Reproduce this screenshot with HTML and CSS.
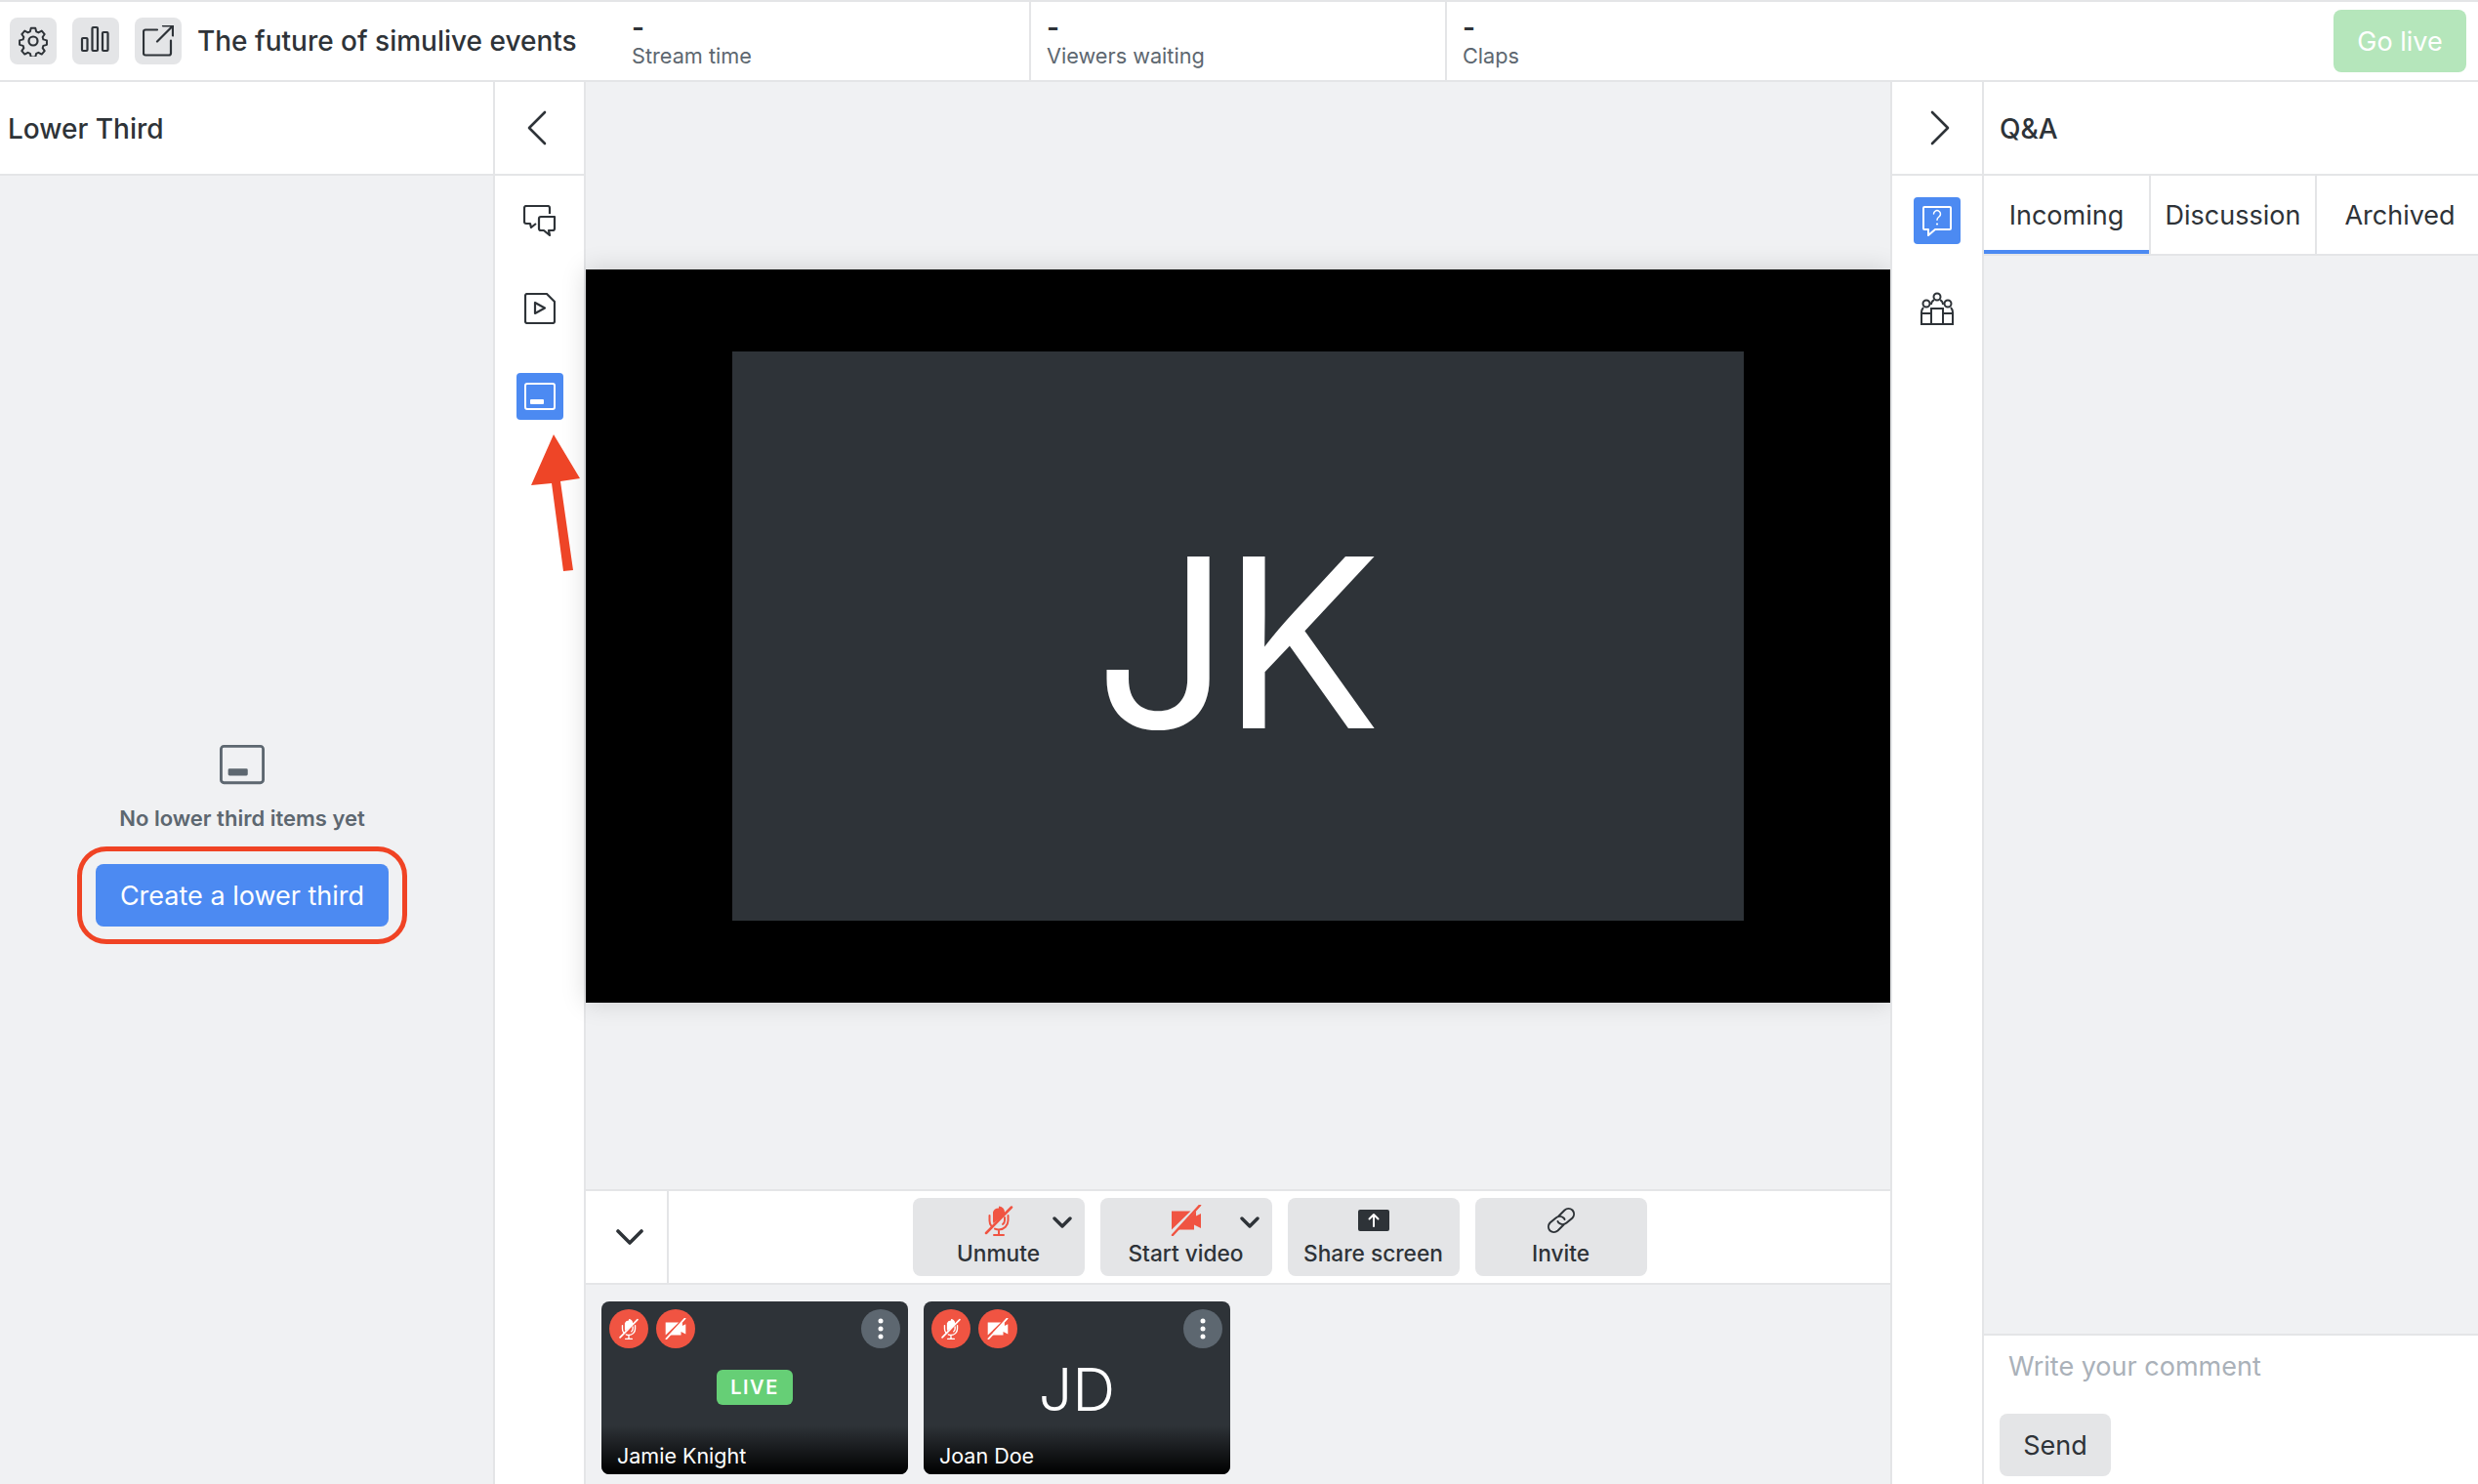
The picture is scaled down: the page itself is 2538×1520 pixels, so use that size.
FILE: index.html
```html
<!DOCTYPE html>
<html lang="en">
<head>
    <meta charset="UTF-8">
    <title>The future of simulive events</title>
    <link rel="stylesheet" href="styles.css">
</head>
<body>

<svg class="defs" width="0" height="0">
    <symbol id="mic-off" viewBox="0 0 32 32">
        <path d="M16 1.500a6 6 0 0 1 6 6v2.500l-11.500 9a7 7 0 0 1-.5-2.500v-9a6 6 0 0 1 6-4z" fill="currentColor"/>
        <path d="M6.500 11v5a9.500 9.500 0 0 0 2 6M25.500 11v5a9.500 9.500 0 0 1-9.500 9.500 9.500 9.500 0 0 1-4-.9M16 25.500V31M11 31h10M20 20a5 5 0 0 0 2-4v-3" fill="none" stroke="currentColor" stroke-width="2" stroke-linecap="round"/>
        <path d="M29 2.500 3 29" fill="none" stroke="currentColor" stroke-width="2.500" stroke-linecap="round"/>
    </symbol>
    <symbol id="video-off" viewBox="0 0 32 32">
        <path d="M1 6.500h19.500L1 25.500zM26 6.500 7 25.500h17v-5l7 3.500V9l-5 2.500z" fill="currentColor"/>
        <path d="M30 .5 2 31" fill="none" stroke="currentColor" stroke-width="2.500" stroke-linecap="round"/>
    </symbol>
    <symbol id="dots" viewBox="0 0 8 24">
        <circle cx="4" cy="4" r="2.500" fill="currentColor"/>
        <circle cx="4" cy="12" r="2.500" fill="currentColor"/>
        <circle cx="4" cy="20" r="2.500" fill="currentColor"/>
    </symbol>
    <symbol id="lower-third" viewBox="0 0 32 32">
        <rect x="1" y="3" width="30" height="26" rx="2" fill="none" stroke="currentColor" stroke-width="2"/>
        <rect x="6" y="19" width="14" height="5" rx="1" fill="currentColor"/>
    </symbol>
</svg>

<div class="app">

    <!-- Barre du haut -->
    <header class="topbar">
        <div class="topbar-left">
            <button class="icon-btn">
                <svg width="32" height="32" viewBox="0 0 32 32" fill="none" stroke="currentColor" stroke-width="2.200" stroke-linejoin="round">
                    <path d="M13.500 1.500h5l1 4 2.500 1.200 3.700-2 3.300 3.800-2.300 3.300.8 2.600 4 1.100v5l-4 1.100-.8 2.600 2.300 3.300-3.300 3.800-3.700-2-2.500 1.200-1 4h-5l-1-4-2.500-1.200-3.700 2-3.300-3.800 2.300-3.300-.8-2.600-4-1.100v-5l4-1.100.8-2.600L3 8.500l3.300-3.800 3.700 2 2.500-1.200z" transform="translate(1.600 1.400) scale(.9)"/>
                    <circle cx="16" cy="16" r="4.500"/>
                </svg>
            </button>
            <button class="icon-btn">
                <svg width="32" height="32" viewBox="0 0 32 32" fill="none" stroke="currentColor" stroke-width="2.200">
                    <rect x="2" y="13" width="5.500" height="13" rx="1"/>
                    <rect x="12.500" y="2" width="5.500" height="24" rx="1"/>
                    <rect x="23" y="7" width="5.500" height="19" rx="1"/>
                </svg>
            </button>
            <button class="icon-btn">
                <svg width="32" height="32" viewBox="0 0 32 32" fill="none" stroke="currentColor" stroke-width="2.200" stroke-linecap="round" stroke-linejoin="round">
                    <path d="M15 5H3a2 2 0 0 0-2 2v22a2 2 0 0 0 2 2h24a2 2 0 0 0 2-2V16M21 1h10v10M31 1 15 17" transform="translate(0 -.5)"/>
                </svg>
            </button>
            <h1 class="event-title">The future of simulive events</h1>
        </div>
        <div class="stat stat-first"><strong>-</strong><span>Stream time</span></div>
        <div class="stat"><strong>-</strong><span>Viewers waiting</span></div>
        <div class="stat stat-last"><strong>-</strong><span>Claps</span></div>
        <button class="btn-live">Go live</button>
    </header>

    <div class="workspace">

        <!-- Panneau gauche -->
        <aside class="panel panel-left">
            <div class="panel-head"><h2>Lower Third</h2></div>
            <div class="empty-state">
                <svg class="empty-icon" width="46" height="46"><use href="#lower-third"/></svg>
                <p>No lower third items yet</p>
                <div class="ring"><button class="btn-primary">Create a lower third</button></div>
            </div>
        </aside>

        <nav class="rail rail-left">
            <div class="rail-toggle">
                <svg width="24" height="36" viewBox="0 0 24 36" fill="none" stroke="currentColor" stroke-width="2.600" stroke-linecap="round" stroke-linejoin="round"><path d="M20 2 4 18l16 16"/></svg>
            </div>
            <div class="rail-items">
                <button class="rail-btn">
                    <svg width="34" height="32" viewBox="0 0 34 32" fill="none" stroke="currentColor" stroke-width="2.200" stroke-linejoin="round">
                        <path d="M27 9V3a2 2 0 0 0-2-2H3a2 2 0 0 0-2 2v14a2 2 0 0 0 2 2h4l1 4 5-4"/>
                        <path d="M16 14a2 2 0 0 1 2-2h14v12a2 2 0 0 1-2 2h-4l1 5-6-5h-3a2 2 0 0 1-2-2z"/>
                    </svg>
                </button>
                <button class="rail-btn">
                    <svg width="32" height="32" viewBox="0 0 32 32" fill="none" stroke="currentColor" stroke-width="2.200" stroke-linejoin="round">
                        <path d="M3 1h20l8 8v20a2 2 0 0 1-2 2H3a2 2 0 0 1-2-2V3a2 2 0 0 1 2-2z"/>
                        <path d="M11 10v11l10-5.500z"/>
                    </svg>
                </button>
                <button class="rail-btn rail-btn-active">
                    <svg width="32" height="32"><use href="#lower-third"/></svg>
                </button>
            </div>
        </nav>

        <!-- Zone centrale -->
        <main class="stage-col">
            <div class="stage">
                <div class="video">
                    <div class="video-inner">JK</div>
                </div>
            </div>
            <div class="controls">
                <button class="collapse">
                    <svg width="30" height="18" viewBox="0 0 30 18" fill="none" stroke="currentColor" stroke-width="3.600" stroke-linecap="round" stroke-linejoin="round"><path d="M3 3l12 12L27 3"/></svg>
                </button>
                <div class="control-list">
                    <button class="control">
                        <svg class="red" width="32" height="32"><use href="#mic-off"/></svg>
                        <span>Unmute</span>
                        <svg class="caret" width="20" height="12" viewBox="0 0 20 12" fill="none" stroke="currentColor" stroke-width="3.400" stroke-linecap="round" stroke-linejoin="round"><path d="M2 2l8 8 8-8"/></svg>
                    </button>
                    <button class="control">
                        <svg class="red" width="32" height="32"><use href="#video-off"/></svg>
                        <span>Start video</span>
                        <svg class="caret" width="20" height="12" viewBox="0 0 20 12" fill="none" stroke="currentColor" stroke-width="3.400" stroke-linecap="round" stroke-linejoin="round"><path d="M2 2l8 8 8-8"/></svg>
                    </button>
                    <button class="control">
                        <svg width="32" height="32" viewBox="0 0 32 32">
                            <rect y="5" width="32" height="22" rx="2" fill="currentColor"/>
                            <path d="M16 22V10M11.500 14.500 16 10l4.500 4.500" fill="none" stroke="#fff" stroke-width="2" stroke-linecap="round" stroke-linejoin="round"/>
                        </svg>
                        <span>Share screen</span>
                    </button>
                    <button class="control">
                        <svg width="32" height="32" viewBox="0 0 32 32" fill="none" stroke="currentColor" stroke-width="2" stroke-linecap="round">
                            <path d="M13.500 11.500 19.500 5.500a6 6 0 0 1 8 0 6 6 0 0 1 0 8l-6 5a6 6 0 0 1-8 0 4 4 0 0 1-1-1.500"/>
                            <path d="M18.500 20.500 12.500 26.500a6 6 0 0 1-8 0 6 6 0 0 1 0-8l6-5a6 6 0 0 1 8 0 4 4 0 0 1 1 1.500"/>
                        </svg>
                        <span>Invite</span>
                    </button>
                </div>
            </div>
            <div class="tiles">
                <div class="tile">
                    <div class="tile-top">
                        <span class="round round-red"><svg width="22" height="22"><use href="#mic-off"/></svg></span>
                        <span class="round round-red"><svg width="22" height="22"><use href="#video-off"/></svg></span>
                        <span class="round round-grey"><svg width="8" height="24"><use href="#dots"/></svg></span>
                    </div>
                    <div class="tile-mid"><span class="live">LIVE</span></div>
                    <div class="tile-name">Jamie Knight</div>
                </div>
                <div class="tile">
                    <div class="tile-top">
                        <span class="round round-red"><svg width="22" height="22"><use href="#mic-off"/></svg></span>
                        <span class="round round-red"><svg width="22" height="22"><use href="#video-off"/></svg></span>
                        <span class="round round-grey"><svg width="8" height="24"><use href="#dots"/></svg></span>
                    </div>
                    <div class="tile-mid tile-initials">JD</div>
                    <div class="tile-name">Joan Doe</div>
                </div>
            </div>
        </main>

        <nav class="rail rail-right">
            <div class="rail-toggle">
                <svg width="24" height="36" viewBox="0 0 24 36" fill="none" stroke="currentColor" stroke-width="2.600" stroke-linecap="round" stroke-linejoin="round"><path d="M4 2l16 16L4 34"/></svg>
            </div>
            <div class="rail-items">
                <button class="rail-btn rail-btn-active">
                    <svg width="32" height="32" viewBox="0 0 32 32">
                        <path d="M3 2h26a1 1 0 0 1 1 1v21a1 1 0 0 1-1 1H14l-7 6v-6H3a1 1 0 0 1-1-1V3a1 1 0 0 1 1-1z" fill="none" stroke="currentColor" stroke-width="2" stroke-linejoin="round"/>
                        <path d="M12.500 9a3.500 3.500 0 1 1 5.500 3c-1.300.9-2 1.600-2 3.200" fill="none" stroke="currentColor" stroke-width="1.500" stroke-linecap="round"/>
                        <circle cx="16" cy="19.500" r="1.100" fill="currentColor"/>
                    </svg>
                </button>
                <button class="rail-btn">
                    <svg width="34" height="34" viewBox="0 0 34 34" fill="none" stroke="currentColor" stroke-width="2">
                        <rect x="1" y="22" width="10" height="11"/>
                        <rect x="11" y="17" width="12" height="16"/>
                        <rect x="23" y="22" width="10" height="11"/>
                        <circle cx="17" cy="5" r="3.500"/>
                        <circle cx="6" cy="12" r="3.500"/>
                        <circle cx="28" cy="12" r="3.500"/>
                        <path d="M11 13c0-3 2-4.500 3-4.500M23 13c0-3-2-4.500-3-4.500M1 21c0-3 1-4 2-5M33 21c0-3-1-4-2-5"/>
                    </svg>
                </button>
            </div>
        </nav>

        <!-- Panneau droit -->
        <aside class="panel panel-right">
            <div class="panel-head"><h2>Q&amp;A</h2></div>
            <div class="tabs">
                <div class="tab tab-active">Incoming</div>
                <div class="tab">Discussion</div>
                <div class="tab tab-last">Archived</div>
            </div>
            <div class="qa-list"></div>
            <div class="composer">
                <div class="placeholder">Write your comment</div>
                <button class="btn-send">Send</button>
            </div>
        </aside>
    </div>

    <!-- Annotation rouge par dessus la capture -->
    <svg class="arrow" width="60" height="150" viewBox="0 0 60 150">
        <path d="M27 0 4 52 25 50 37 140 47 139 34 48 54 45z" fill="#ee4527"/>
    </svg>
</div>

</body>
</html>
```

FILE: styles.css
```css
* {
    box-sizing: border-box;
}

body {
    margin: 0;
    font-family: Inter, "Noto Sans", sans-serif;
    color: #2e3338;
    background-color: #f0f1f3;
}

button {
    font-family: inherit;
    color: inherit;
    border: none;
    padding: 0;
    background: none;
}

svg {
    display: block;
}

.defs {
    position: absolute;
}

.app {
    position: relative;
    display: flex;
    flex-direction: column;
    height: 100vh;
    overflow: hidden;
}

/* Barre du haut */
.topbar {
    display: flex;
    align-items: stretch;
    height: 84px;
    flex-shrink: 0;
    background-color: #fff;
    border-top: 2px solid #e4e5e7;
    border-bottom: 2px solid #e4e5e7;
}

.topbar-left {
    display: flex;
    align-items: center;
    width: 635px;
    flex-shrink: 0;
    padding-left: 10px;
}

.icon-btn {
    display: flex;
    align-items: center;
    justify-content: center;
    width: 48px;
    height: 48px;
    margin-right: 16px;
    border-radius: 8px;
    background-color: #e4e5e7;
}

.event-title {
    margin: 0;
    font-size: 28px;
    font-weight: 500;
}

.stat {
    display: flex;
    flex-direction: column;
    width: 426px;
    flex-shrink: 0;
    padding: 10px 0 0 16px;
    border-left: 2px solid #e4e5e7;
}

.stat-first {
    width: 419px;
    padding-left: 12px;
    border-left: none;
}

.stat-last {
    width: auto;
    flex: 1;
}

.stat strong {
    font-size: 28px;
    line-height: 32px;
    font-weight: 600;
}

.stat span {
    font-size: 21.700px;
    line-height: 27px;
    color: #5d6770;
}

.btn-live {
    align-self: center;
    width: 136px;
    height: 64px;
    margin-right: 12px;
    border-radius: 8px;
    font-size: 27px;
    color: #fff;
    background-color: #b5e6bb;
}

.workspace {
    display: flex;
    flex: 1;
    min-height: 0;
}

/* Panneaux */
.panel {
    display: flex;
    flex-direction: column;
}

.panel-left {
    width: 505px;
    flex-shrink: 0;
}

.panel-right {
    flex: 1;
}

.panel-head {
    display: flex;
    align-items: center;
    height: 96px;
    flex-shrink: 0;
    padding-top: 2px;
    background-color: #fff;
    border-bottom: 2px solid #e4e5e7;
}

.panel-head h2 {
    margin: 0;
    font-size: 28px;
    font-weight: 500;
}

.panel-left .panel-head {
    padding-left: 8px;
}

.panel-right .panel-head {
    padding-left: 16px;
}

.empty-state {
    display: flex;
    flex-direction: column;
    align-items: center;
    padding-top: 580px;
    padding-right: 9px;
}

.empty-icon {
    color: #5d6770;
}

.empty-state p {
    margin: 16px 0 0;
    font-size: 22px;
    line-height: 32px;
    font-weight: 600;
    color: #5d6770;
}

.ring {
    margin-top: 13px;
    padding: 13px 14px;
    border: 5px solid #f04324;
    border-radius: 30px;
}

.btn-primary {
    display: block;
    width: 300px;
    height: 64px;
    border-radius: 8px;
    font-size: 27px;
    color: #fff;
    background-color: #4c8af2;
}

/* Rails */
.rail {
    display: flex;
    flex-direction: column;
    flex-shrink: 0;
    background-color: #fff;
    border-left: 2px solid #e4e5e7;
}

.rail-left {
    width: 93px;
}

.rail-right {
    width: 96px;
    border-right: 2px solid #e4e5e7;
}

.rail-toggle {
    display: flex;
    align-items: center;
    justify-content: center;
    height: 96px;
    flex-shrink: 0;
    border-bottom: 2px solid #e4e5e7;
}

.rail-left .rail-toggle {
    padding-right: 6px;
}

.rail-right .rail-toggle {
    padding-left: 6px;
}

.rail-items {
    display: flex;
    flex-direction: column;
    align-items: center;
    gap: 42px;
    padding-top: 22px;
}

.rail-btn {
    display: flex;
    align-items: center;
    justify-content: center;
    width: 48px;
    height: 48px;
    border-radius: 4px;
}

.rail-btn-active {
    color: #fff;
    background-color: #4c8af2;
}

/* Zone centrale */
.stage-col {
    display: flex;
    flex-direction: column;
    width: 1338px;
    flex-shrink: 0;
    border-left: 2px solid #e4e5e7;
}

.stage {
    display: flex;
    align-items: center;
    flex: 1;
    min-height: 0;
}

.video {
    width: 100%;
    height: 751px;
    padding: 84px 150px;
    background-color: #000;
    box-shadow: 0 0 24px rgba(0, 0, 0, 0.15);
}

.video-inner {
    display: flex;
    align-items: center;
    justify-content: center;
    height: 100%;
    padding-top: 13px;
    padding-right: 8px;
    font-size: 242px;
    font-weight: 400;
    letter-spacing: -8px;
    color: #fff;
    background-color: #2e3338;
}

.controls {
    display: flex;
    height: 98px;
    flex-shrink: 0;
    background-color: #fff;
    border-top: 2px solid #e4e5e7;
    border-bottom: 2px solid #e4e5e7;
}

.collapse {
    display: flex;
    align-items: center;
    justify-content: center;
    width: 85px;
    padding-left: 6px;
    border-right: 2px solid #e4e5e7;
}

.control-list {
    display: flex;
    flex: 1;
    align-items: center;
    justify-content: center;
    gap: 16px;
}

.control {
    position: relative;
    display: flex;
    flex-direction: column;
    align-items: center;
    width: 176px;
    height: 80px;
    padding-top: 7px;
    border-radius: 8px;
    background-color: #e4e5e7;
}

.control span {
    margin-top: 3px;
    font-size: 22.700px;
    line-height: 30px;
    font-weight: 500;
}

.red {
    color: #f05442;
}

.caret {
    position: absolute;
    top: 19px;
    right: 13px;
}

.tiles {
    display: flex;
    gap: 16px;
    height: 204px;
    flex-shrink: 0;
    padding: 17px 16px 0;
}

.tile {
    display: flex;
    flex-direction: column;
    width: 314px;
    height: 177px;
    padding-top: 8px;
    border-radius: 8px;
    color: #fff;
    background-color: #2e3338;
    overflow: hidden;
}

.tile-top {
    display: flex;
    gap: 8px;
    padding: 0 8px;
    flex-shrink: 0;
}

.round {
    display: flex;
    align-items: center;
    justify-content: center;
    width: 40px;
    height: 40px;
    border-radius: 50%;
}

.round-red {
    background-color: #f05442;
}

.round-grey {
    margin-left: auto;
    background-color: #5d6770;
}

.tile-mid {
    display: flex;
    align-items: center;
    justify-content: center;
    flex: 1;
    min-height: 0;
}

.tile-initials {
    padding-top: 4px;
    font-size: 61px;
    font-weight: 300;
}

.live {
    display: block;
    width: 78px;
    height: 36px;
    border-radius: 6px;
    font-size: 20px;
    line-height: 36px;
    font-weight: 600;
    letter-spacing: 1.500px;
    text-align: center;
    background-color: #66cf76;
}

.tile-name {
    height: 50px;
    flex-shrink: 0;
    padding: 14px 16px 0;
    font-size: 21.500px;
    line-height: 34px;
    background: linear-gradient(rgba(0, 0, 0, 0), #000);
}

/* Q&A */
.tabs {
    display: flex;
    height: 82px;
    flex-shrink: 0;
    background-color: #fff;
    border-bottom: 2px solid #e4e5e7;
}

.tab {
    display: flex;
    align-items: center;
    justify-content: center;
    width: 171px;
    font-size: 27px;
    border-right: 2px solid #e4e5e7;
}

.tab + .tab {
    width: 170px;
}

.tab-last.tab-last {
    flex: 1;
    border-right: none;
}

.tab-active {
    position: relative;
}

.tab-active::after {
    content: "";
    position: absolute;
    left: 0;
    right: 0;
    bottom: 0;
    height: 4px;
    background-color: #4c8af2;
}

.qa-list {
    flex: 1;
}

.composer {
    height: 154px;
    flex-shrink: 0;
    padding: 0 16px;
    background-color: #fff;
    border-top: 2px solid #e4e5e7;
}

.placeholder {
    padding: 14px 0 0 9px;
    font-size: 27px;
    line-height: 36px;
    color: #aab1b9;
}

.btn-send {
    display: block;
    width: 114px;
    height: 64px;
    margin-top: 30px;
    border-radius: 8px;
    font-size: 27px;
    background-color: #e4e5e7;
}

/* Flèche d'annotation */
.arrow {
    position: absolute;
    left: 540px;
    top: 445px;
}
```
